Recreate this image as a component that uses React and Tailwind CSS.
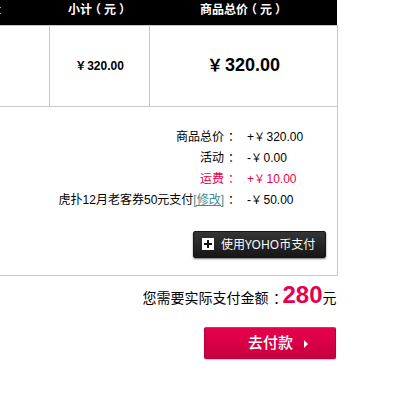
import React from "react";

const lineas = [
  { etiqueta: "商品总价", valor: "320.00", signo: "+" },
  { etiqueta: "活动", valor: "0.00", signo: "-" },
  { etiqueta: "运费", valor: "10.00", signo: "+", destacada: true },
  { etiqueta: "虎扑12月老客券50元支付", valor: "50.00", signo: "-", editable: true },
];

// Dos puntos de ancho completo, centrados en su celda
const DosPuntos = () => (
  <span className="relative top-px left-px font-['Noto_Sans_CJK_TC',sans-serif]">：</span>
);

// Paréntesis a medio ancho con margen a ambos lados
const Titulo = ({ children }) => (
  <>
    {children}
    <span className="inline-block mx-[3px] [font-feature-settings:'halt']">（</span>
    元
    <span className="inline-block mx-[3px] [font-feature-settings:'halt']">）</span>
  </>
);

const CabeceraTabla = () => (
  <div className="flex w-[337px] h-[25px] pt-px bg-black text-white font-bold leading-[18px]">
    <div className="w-[50px] shrink-0 flex flex-col gap-[5px] pt-1.5">
      <span className="w-px h-px bg-[#c8ac22]" />
      <span className="w-px h-px bg-[#c8ac22]" />
    </div>
    <div className="w-[100px] shrink-0 pl-[18px] whitespace-nowrap">
      <Titulo>小计</Titulo>
    </div>
    <div className="flex-1 pl-[50px] whitespace-nowrap">
      <Titulo>商品总价</Titulo>
    </div>
  </div>
);

const FilaPrecios = () => (
  <div className="flex h-[82px] border-y border-r border-[#c9c9c9] font-bold">
    <div className="w-[50px] shrink-0 border-r border-[#c9c9c9]" />
    <div className="w-[100px] shrink-0 border-r border-[#c9c9c9] flex items-baseline justify-center pt-8">
      <span className="w-3 text-[11px]">￥</span>320.00
    </div>
    <div className="flex-1 flex items-baseline justify-center pt-[25px] text-lg">
      <span className="w-[18px] text-base">￥</span>320.00
    </div>
  </div>
);

const Resumen = () => (
  <div className="h-[169px] border-b border-r border-[#c9c9c9] pt-[18px]">
    {lineas.map(({ etiqueta, valor, signo, destacada, editable }) => (
      <div
        key={etiqueta}
        className={`flex h-[21px] leading-[21px] whitespace-nowrap items-baseline ${
          destacada ? "text-[#e8004c]" : ""
        }`}
      >
        <div className="w-[236px] text-right">
          {etiqueta}
          {editable && (
            <a href="#" className="text-[#4a8b91] underline">
              [修改]
            </a>
          )}
          <DosPuntos />
        </div>
        <div className="pl-[11px] flex items-baseline">
          {signo}
          <span className="w-[12.5px] text-[11px]">￥</span>
          {valor}
        </div>
      </div>
    ))}

    <button
      type="button"
      className="mt-[22px] ml-[193px] w-[133px] h-[27px] flex items-center pl-2 rounded-xs border border-[#151515] bg-linear-to-b from-[#353535] to-[#171717] text-white shadow-[0_1px_2px_rgba(0,0,0,0.55)]"
    >
      <svg className="-mt-px" width="12" height="12" viewBox="0 0 12 12" shapeRendering="crispEdges">
        <rect width="12" height="12" rx="1" fill="#fff" />
        <path d="M5 2h2v3h3v2H7v3H5V7H2V5h3z" fill="#111" />
      </svg>
      <span className="ml-[7px] whitespace-nowrap font-['Noto_Sans','Noto_Sans_CJK_SC',sans-serif]">
        使用YOHO币支付
      </span>
    </button>
  </div>
);

const App = () => {
  return (
    <div className="w-[400px] h-[400px] overflow-hidden bg-white text-black text-xs font-['Liberation_Sans','Noto_Sans_CJK_SC',sans-serif]">
      <div className="w-[338px]">
        <CabeceraTabla />
        <FilaPrecios />
        <Resumen />

        <div className="h-[51px] pt-[3px] pr-[1.5px] flex justify-end items-baseline text-sm whitespace-nowrap">
          <span>
            您需要实际支付金额
            <DosPuntos />
          </span>
          <b className="text-2xl text-[#e8004c]">280</b>
          <span>元</span>
        </div>

        <button
          type="button"
          className="ml-[204px] w-[132px] h-8 flex items-center pl-[43px] rounded-xs border border-[#b80039] border-t-[#d23562] bg-linear-to-b from-[#e8004c] to-[#c70040] text-white text-[15px] font-medium shadow-[0_1px_1px_rgba(0,0,0,0.2)]"
        >
          去付款
          <svg className="ml-[11px] mt-px" width="4" height="8" viewBox="0 0 4 8">
            <path d="M0 0l4 4-4 4z" fill="#fff" />
          </svg>
        </button>
      </div>
    </div>
  );
};

export default App;
